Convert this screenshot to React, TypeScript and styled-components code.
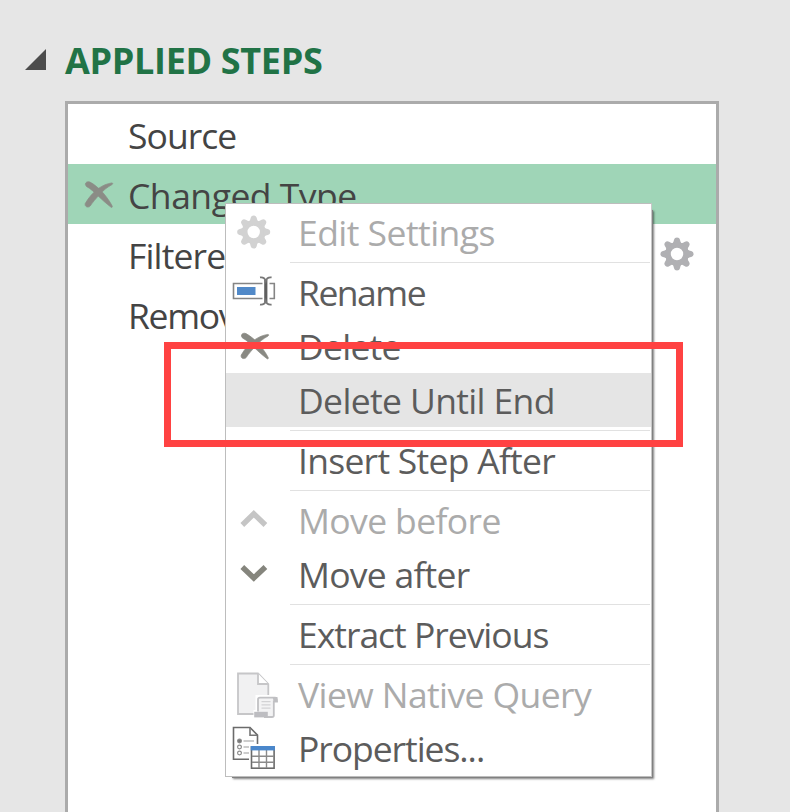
import React from "react";
import styled, { createGlobalStyle } from "styled-components";

const GlobalStyle = createGlobalStyle`
  html, body { margin: 0; padding: 0; background: #e6e6e6; overflow: hidden; }
  * { box-sizing: border-box; }
`;

const Pane = styled.main`
  position: relative;
  width: 790px;
  height: 812px;
  overflow: hidden;
  display: flex;
  flex-direction: column;
  background: #e6e6e6;
  font-family: "Open Sans", "Noto Sans", sans-serif;
  font-size: 35.5px;
  color: #444;
`;

const Header = styled.header`
  display: flex;
  align-items: center;
  height: 101px;
  padding: 21px 0 0 24px;
`;

const Arrow = styled.svg`
  width: 23px;
  height: 23px;
  margin: 0 18px 4px 0;
`;

const Title = styled.h2`
  margin: 0;
  font-size: 36px;
  line-height: 50px;
  font-weight: 700;
  letter-spacing: -0.33px;
  color: #217346;
  white-space: nowrap;
`;

const StepList = styled.ul`
  flex: 1;
  width: 654px;
  margin: 0 0 0 65px;
  padding: 0;
  list-style: none;
  background: #fff;
  border: 3px solid #ababab;
  border-bottom: 0;
`;

const Step = styled.li<{ $selected?: boolean }>`
  display: flex;
  align-items: center;
  height: 60px;
  background: ${(p) => (p.$selected ? "#9fd5b7" : "#fff")};
`;

const StepIcon = styled.svg`
  flex: none;
  width: 60px;
  height: 60px;
`;

const Label = styled.span<{ $track: number; $drop?: number }>`
  flex: 1;
  padding-top: ${(p) => p.$drop ?? 0}px;
  line-height: 50px;
  letter-spacing: ${(p) => p.$track}px;
  white-space: nowrap;
`;

const Menu = styled.div`
  position: absolute;
  left: 225px;
  top: 203px;
  width: 427px;
  height: 574px;
  padding: 1px 0;
  background: #fff;
  border: 1px solid #bdbdbd;
  border-right-color: #c8c8c8;
`;

const MenuShadow = styled.div`
  position: absolute;
  left: 232px;
  top: 210px;
  width: 421px;
  height: 568px;
  background: #808080;
  box-shadow: 1px 1px 2px rgba(0, 0, 0, 0.5);
`;

const MenuItem = styled.div<{ $disabled?: boolean; $hover?: boolean }>`
  display: flex;
  align-items: center;
  height: 54px;
  color: ${(p) => (p.$disabled ? "#ababab" : "#5c5c5c")};
  background: ${(p) => (p.$hover ? "#e5e5e5" : "transparent")};
`;

const IconSlot = styled.span`
  flex: none;
  display: flex;
  width: 72px;
  height: 54px;
`;

const MenuIcon = styled.svg`
  width: 60px;
  height: 54px;
`;

const Divider = styled.div`
  height: 1px;
  margin: 3px 1px 2px 64px;
  background: #e1e1e1;
`;

const Highlight = styled.div`
  position: absolute;
  left: 164px;
  top: 342px;
  width: 519px;
  height: 105px;
  border: 7px solid #ff4242;
`;

const teeth = [0, 45, 90, 135, 180, 225, 270, 315];

function Gear({ color, cx, cy }: { color: string; cx: number; cy: number }) {
  return (
    <g transform={`translate(${cx} ${cy})`}>
      <circle r="9" fill="none" stroke={color} strokeWidth="5.6" />
      {teeth.map((a) => (
        <path
          key={a}
          transform={`rotate(${a})`}
          fill={color}
          d="M-5.2 -10 C-3.6 -11.2 -3.4 -12.4 -3 -14.2 Q-2.5 -16.6 0 -16.6 Q2.5 -16.6 3 -14.2 C3.4 -12.4 3.6 -11.2 5.2 -10 Z"
        />
      ))}
    </g>
  );
}

function Cross({ x, y, color }: { x: number; y: number; color: string }) {
  return (
    <g transform={`translate(${x} ${y})`} fill={color} stroke={color} strokeWidth="0.7" strokeLinejoin="round">
      <path d="M1.4 3.6 C1.2 1.2 3.6 0 6 1.1 C10.4 3.4 14.8 7.2 19.2 12 C22.8 16.2 26 20.6 28.2 25 C28.6 26.4 27.8 26.8 26.8 26 C22 22.4 18 18.6 14.4 15.2 C10.6 11.4 7 8 2.4 5.4 Z" />
      <path d="M1.2 22.6 C4.4 16.8 9.2 11.2 14.8 7.2 C18.8 4.4 23.2 2.6 27.8 1.9 C29 1.9 29 2.9 28 3.6 C22.8 6.4 19.2 9.6 15.6 13.6 C11.8 17.6 8.8 21.2 6.2 25 C4.6 27 0.4 26.2 1.2 22.6 Z" />
    </g>
  );
}

const icons = {
  gear: (
    <MenuIcon viewBox="226 205 60 54">
      <Gear color="#d2d2d2" cx={253.7} cy={232} />
    </MenuIcon>
  ),
  rename: (
    <MenuIcon viewBox="226 265 60 54" fill="none">
      <path d="M262.5 283.5H233.5V298.5H262.5M269.5 283.5H274.3V298.5H269.5" stroke="#858585" strokeWidth="1.6" />
      <rect x="237" y="287" width="18.5" height="8" fill="#5189c8" />
      <path d="M265.8 280V302" stroke="#5f5f5f" strokeWidth="3.2" />
      <path
        d="M260 277.4Q264.5 276.8 265.8 281Q267 276.8 271.6 277.4M260 304.6Q264.5 305.2 265.8 301Q267 305.2 271.6 304.6"
        stroke="#777"
        strokeWidth="1.8"
      />
    </MenuIcon>
  ),
  remove: (
    <MenuIcon viewBox="226 319 60 54">
      <Cross x={240} y={332.5} color="#898983" />
    </MenuIcon>
  ),
  up: (
    <MenuIcon viewBox="226 493 60 54">
      <path d="M242.3 525L253.8 513.8L265.4 525" fill="none" stroke="#c5c5c5" strokeWidth="5.4" />
    </MenuIcon>
  ),
  down: (
    <MenuIcon viewBox="226 547 60 54">
      <path d="M242.3 567L253.8 578L265.4 567" fill="none" stroke="#85857d" strokeWidth="5.4" />
    </MenuIcon>
  ),
  query: (
    <MenuIcon viewBox="226 667 60 54">
      <path d="M238 673.5H258L268.3 684V714H238Z" fill="#f1f1f2" stroke="#c6c6c8" strokeWidth="1.8" />
      <path d="M258 673.5V684H268.3" fill="#fff" stroke="#c6c6c8" strokeWidth="1.8" />
      <path d="M255 711.5V718H274.5V703H278V696.5H257V711.5Z" fill="#fff" stroke="#fff" strokeWidth="3" />
      <path
        d="M258 711.5V699.5Q258 697.6 260 697.6H275Q277 697.6 277 701.5H273.8V715.5Q273.8 717 272 717H264"
        fill="#f3f3f4"
        stroke="#c1c1c4"
        strokeWidth="1.8"
      />
      <path d="M272.6 697H277.5V702H273.8Z" fill="#bfbfc2" />
      <rect x="254.2" y="711.8" width="13.6" height="5.6" fill="#bdbdc1" />
      <path d="M261.5 701.7H270.5M261.5 704.9H270.5M261.5 708.1H270.5" stroke="#d2d2d4" strokeWidth="1.2" />
    </MenuIcon>
  ),
  properties: (
    <MenuIcon viewBox="226 721 60 54" fill="none">
      <path d="M249 759.2H233.5V727.5H250L257.5 735.2V744" fill="#fff" stroke="#6b6b6b" strokeWidth="1.6" />
      <path d="M250 727.5V735.2H257.5" stroke="#777" strokeWidth="1.6" />
      <g stroke="#8c8c8c" strokeWidth="1.2">
        <circle cx="239.5" cy="741" r="1.9" fill="#777" />
        <circle cx="239.5" cy="747" r="1.9" />
        <circle cx="239.5" cy="753" r="1.9" />
        <path d="M243.5 741H254M243.5 747H249M243.5 753H249" stroke="#9c9c9c" />
      </g>
      <rect x="251.5" y="747" width="22.6" height="21.2" fill="#fff" stroke="#6b6b6b" strokeWidth="1.6" />
      <path d="M259 750V768M266.5 750V768M252 756.2H274M252 762.3H274" stroke="#8a8a8a" strokeWidth="1.4" />
      <rect x="250.7" y="746" width="24.2" height="4.4" fill="#4a87cb" />
    </MenuIcon>
  ),
};

type Entry = {
  text: string;
  track: number;
  icon?: keyof typeof icons;
  disabled?: boolean;
  hover?: boolean;
};

const groups: Entry[][] = [
  [{ text: "Edit Settings", track: -0.54, icon: "gear", disabled: true }],
  [
    { text: "Rename", track: -1.5, icon: "rename" },
    { text: "Delete", track: -0.75, icon: "remove" },
    { text: "Delete Until End", track: -0.64, hover: true },
  ],
  [{ text: "Insert Step After", track: -0.73 }],
  [
    { text: "Move before", track: -0.62, icon: "up", disabled: true },
    { text: "Move after", track: -0.75, icon: "down" },
  ],
  [{ text: "Extract Previous", track: -1.02 }],
  [
    { text: "View Native Query", track: -0.6, icon: "query", disabled: true },
    { text: "Properties...", track: -1.05, icon: "properties" },
  ],
];

export default function App() {
  return (
    <Pane>
      <GlobalStyle />
      <Header>
        <Arrow viewBox="0 0 23 23">
          <path d="M1 22L22 1V22Z" fill="#4c4c4c" />
        </Arrow>
        <Title>APPLIED STEPS</Title>
      </Header>
      <StepList>
        <Step>
          <StepIcon />
          <Label $track={-0.96} $drop={2}>Source</Label>
        </Step>
        <Step $selected>
          <StepIcon viewBox="68 164 60 60">
            <Cross x={84} y={181} color="#8b8c86" />
          </StepIcon>
          <Label $track={-0.5} $drop={2}>Changed Type</Label>
        </Step>
        <Step>
          <StepIcon />
          <Label $track={-0.85} $drop={2}>Filtere</Label>
          <StepIcon viewBox="656 224 60 60">
            <Gear color="#b0b0b3" cx={677} cy={254} />
          </StepIcon>
        </Step>
        <Step>
          <StepIcon />
          <Label $track={-1.3} $drop={2}>Remov</Label>
        </Step>
      </StepList>
      <MenuShadow />
      <Menu>
        {groups.map((group, g) => (
          <React.Fragment key={g}>
            {g > 0 && <Divider />}
            {group.map((e) => (
              <MenuItem key={e.text} $disabled={e.disabled} $hover={e.hover}>
                <IconSlot>{e.icon && icons[e.icon]}</IconSlot>
                <Label $track={e.track}>{e.text}</Label>
              </MenuItem>
            ))}
          </React.Fragment>
        ))}
      </Menu>
      <Highlight />
    </Pane>
  );
}
